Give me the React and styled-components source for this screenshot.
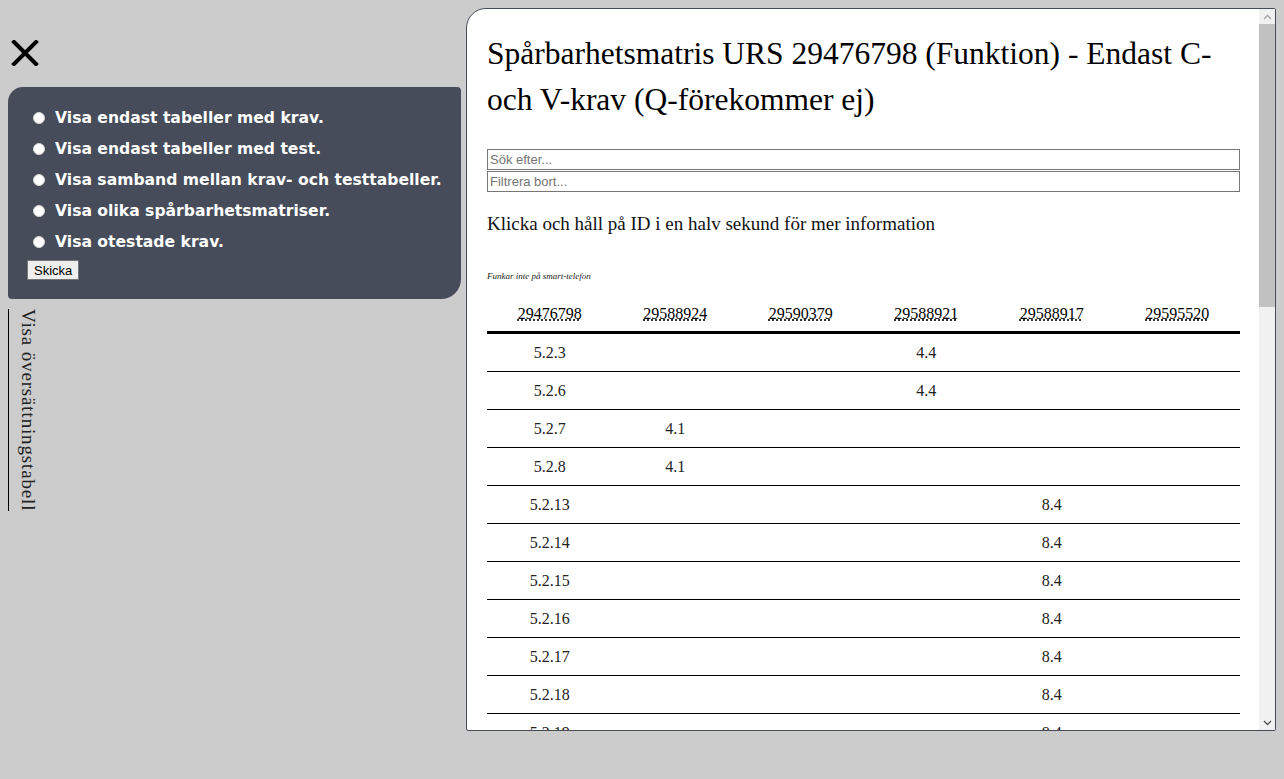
import React from 'react';
import styled, { createGlobalStyle } from 'styled-components';

const GlobalStyle = createGlobalStyle`
  body {
    margin: 8px;
    background-color: #cccccc;
    font-family: "Liberation Serif", "Times New Roman", serif;
  }
`;

const Page = styled.div`
  display: flex;
  align-items: flex-start;
  gap: 5px;
`;

const SideColumn = styled.div`
  width: 453px;
  flex-shrink: 0;
  display: flex;
  flex-direction: column;
`;

const CloseButton = styled.button`
  background: none;
  border: none;
  padding: 0;
  margin: 32px 0 0 3px;
  width: 28px;
  height: 26px;
  cursor: pointer;
  align-self: flex-start;
`;

const MenuBox = styled.form`
  margin-top: 21px;
  background-color: #464c59;
  border-radius: 15px 4px 20px 4px;
  padding: 15px 19px 19px 19px;
  display: flex;
  flex-direction: column;
  align-items: flex-start;
`;

const OptionLabel = styled.label`
  display: flex;
  align-items: center;
  gap: 10px;
  height: 31px;
  padding-left: 6px;
  color: #ffffff;
  font-family: "DejaVu Sans", Verdana, sans-serif;
  font-weight: bold;
  font-size: 15.6px;
  cursor: pointer;
`;

const Radio = styled.input`
  appearance: none;
  margin: 0;
  width: 12px;
  height: 12px;
  border-radius: 50%;
  background-color: #ffffff;
  border: 1px solid #d6d6d6;

  &:checked {
    box-shadow: inset 0 0 0 3px #ffffff;
    background-color: #464c59;
  }
`;

const SubmitButton = styled.button`
  margin-top: 3px;
  font-family: "Liberation Sans", Arial, sans-serif;
  font-size: 13px;
  padding: 1px 6px;
  height: 20px;
  background-color: #efefef;
  border: 1px solid #767676;
  border-radius: 0;
  color: #000;
`;

const TranslationToggle = styled.div`
  margin-top: 10px;
  align-self: flex-start;
  writing-mode: vertical-rl;
  border-left: 1px solid #000;
  padding-left: 9px;
  font-size: 19px;
  letter-spacing: 0.85px;
  line-height: 20px;
  color: #222;
  cursor: pointer;
`;

const ContentPanel = styled.main`
  width: 808px;
  height: 721px;
  display: flex;
  background-color: #ffffff;
  border: 1px solid #454b57;
  border-radius: 20px 2px 2px 2px;
  overflow: hidden;
`;

const ScrollArea = styled.div`
  flex: 1;
  min-width: 0;
  overflow: hidden;
`;

const ScrollTrack = styled.div`
  width: 16px;
  flex-shrink: 0;
  display: flex;
  flex-direction: column;
  background-color: #f1f1f1;
`;

const ScrollArrow = styled.div`
  height: 15px;
  display: flex;
  align-items: center;
  justify-content: center;
`;

const ScrollThumb = styled.div`
  height: 283px;
  background-color: #c1c1c1;
`;

const ScrollRest = styled.div`
  flex: 1;
`;

const ContentInner = styled.div`
  padding: 22px 19px 0 20px;
`;

const Title = styled.h1`
  margin: 0 0 26px 0;
  font-weight: normal;
  font-size: 31.5px;
  line-height: 46px;
  color: #000;
`;

const SearchInput = styled.input`
  display: block;
  box-sizing: border-box;
  width: 100%;
  height: 21px;
  margin: 0 0 1px 0;
  padding: 1px 2px;
  border: 1px solid #767676;
  font-family: "Liberation Sans", Arial, sans-serif;
  font-size: 13px;

  &::placeholder {
    color: #757575;
  }
`;

const Hint = styled.p`
  margin: 20px 0 0 0;
  font-size: 19px;
  line-height: 24px;
  color: #111;
`;

const SmallNote = styled.p`
  margin: 35px 0 0 0;
  font-size: 9px;
  font-style: italic;
  color: #222;
`;

const Matrix = styled.table`
  width: 100%;
  margin-top: 16px;
  border-collapse: collapse;
  table-layout: fixed;
`;

const HeadCell = styled.th`
  font-weight: normal;
  font-size: 16px;
  height: 34px;
  border-bottom: 3px solid #000;
  text-align: center;
  padding: 0;
`;

const IdAbbr = styled.abbr`
  text-decoration: underline dotted;
  text-underline-offset: 1px;
  cursor: help;
`;

const Row = styled.tr`
  border-bottom: 1px solid #000;
`;

const Cell = styled.td`
  height: 37px;
  padding: 0;
  text-align: center;
  font-size: 16px;
  color: #222;
`;

const columns = ['29476798', '29588924', '29590379', '29588921', '29588917', '29595520'];

const mapping = [
  ['5.2.3', 3, '4.4'],
  ['5.2.6', 3, '4.4'],
  ['5.2.7', 1, '4.1'],
  ['5.2.8', 1, '4.1'],
  ['5.2.13', 4, '8.4'],
  ['5.2.14', 4, '8.4'],
  ['5.2.15', 4, '8.4'],
  ['5.2.16', 4, '8.4'],
  ['5.2.17', 4, '8.4'],
  ['5.2.18', 4, '8.4'],
  ['5.2.19', 4, '8.4'],
  ['5.2.20', 4, '8.4'],
];

const rows = mapping.map(([id, col, value]) => {
  const row = [id, '', '', '', '', ''];
  row[col] = value;
  return row;
});

const options = [
  'Visa endast tabeller med krav.',
  'Visa endast tabeller med test.',
  'Visa samband mellan krav- och testtabeller.',
  'Visa olika spårbarhetsmatriser.',
  'Visa otestade krav.',
];

function App() {
  return (
    <>
      <GlobalStyle />
      <Page>
        <SideColumn>
          <CloseButton aria-label="Stäng">
            <svg width="28" height="26" viewBox="0 0 28 26">
              <path d="M3 2 L25 24 M25 2 L3 24" stroke="#000" strokeWidth="4" strokeLinecap="square" />
            </svg>
          </CloseButton>
          <MenuBox onSubmit={(e) => e.preventDefault()}>
            {options.map((text) => (
              <OptionLabel key={text}>
                <Radio type="radio" name="view" />
                {text}
              </OptionLabel>
            ))}
            <SubmitButton type="submit">Skicka</SubmitButton>
          </MenuBox>
          <TranslationToggle>Visa översättningstabell</TranslationToggle>
        </SideColumn>
        <ContentPanel>
          <ScrollArea>
            <ContentInner>
              <Title>Spårbarhetsmatris URS 29476798 (Funktion) - Endast C- och V-krav (Q-förekommer ej)</Title>
              <SearchInput placeholder="Sök efter..." />
              <SearchInput placeholder="Filtrera bort..." />
              <Hint>Klicka och håll på ID i en halv sekund för mer information</Hint>
              <SmallNote>Funkar inte på smart-telefon</SmallNote>
              <Matrix>
                <thead>
                  <tr>
                    {columns.map((id) => (
                      <HeadCell key={id}>
                        <IdAbbr title={id}>{id}</IdAbbr>
                      </HeadCell>
                    ))}
                  </tr>
                </thead>
                <tbody>
                  {rows.map((row) => (
                    <Row key={row[0]}>
                      {row.map((value, i) => (
                        <Cell key={i}>{value}</Cell>
                      ))}
                    </Row>
                  ))}
                </tbody>
              </Matrix>
            </ContentInner>
          </ScrollArea>
          <ScrollTrack>
            <ScrollArrow>
              <svg width="9" height="6" viewBox="0 0 9 6">
                <path d="M1 5 L4.5 1.5 L8 5" fill="none" stroke="#a3a3a3" strokeWidth="1.3" />
              </svg>
            </ScrollArrow>
            <ScrollThumb />
            <ScrollRest />
            <ScrollArrow>
              <svg width="9" height="6" viewBox="0 0 9 6">
                <path d="M1 1 L4.5 4.5 L8 1" fill="none" stroke="#505050" strokeWidth="1.3" />
              </svg>
            </ScrollArrow>
          </ScrollTrack>
        </ContentPanel>
      </Page>
    </>
  );
}

export default App;
